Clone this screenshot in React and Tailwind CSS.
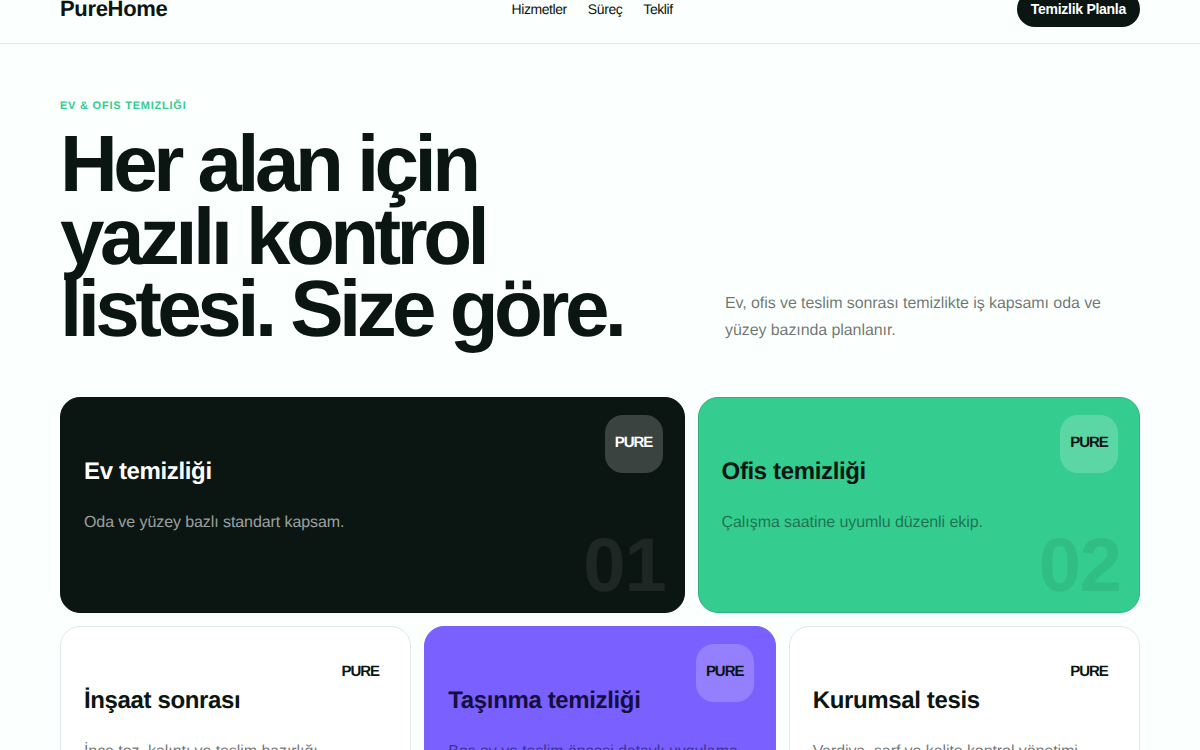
const font = { fontFamily: '"Liberation Sans", Arial, sans-serif' };

const services = [
  {
    title: "Ev temizliği",
    text: "Oda ve yüzey bazlı standart kapsam.",
    span: "col-span-7 bg-[#0b1512] border-[#0b1512]",
    titleColor: "text-white",
    textColor: "text-white/60",
    tag: "bg-white/20 text-white",
    num: "01",
    numColor: "text-white/8",
  },
  {
    title: "Ofis temizliği",
    text: "Çalışma saatine uyumlu düzenli ekip.",
    span: "col-span-5 bg-[#34cc8f] border-[#2bb57e]",
    titleColor: "text-[#0b1512]",
    textColor: "text-[#0b1512]/50",
    tag: "bg-white/20 text-[#0b1512]",
    num: "02",
    numColor: "text-[#0b1512]/7",
  },
  {
    title: "İnşaat sonrası",
    text: "İnce toz, kalıntı ve teslim hazırlığı.",
    span: "col-span-4 bg-white border-[#e3e7e5]",
    titleColor: "text-[#0b1512]",
    textColor: "text-[#0b1512]/60",
    tag: "text-[#0b1512]",
  },
  {
    title: "Taşınma temizliği",
    text: "Boş ev ve teslim öncesi detaylı uygulama.",
    span: "col-span-4 bg-[#7a60ff] border-[#7a60ff]",
    titleColor: "text-[#150f3d]",
    textColor: "text-[#150f3d]/60",
    tag: "bg-white/20 text-[#0b1512]",
  },
  {
    title: "Kurumsal tesis",
    text: "Vardiya, sarf ve kalite kontrol yönetimi.",
    span: "col-span-4 bg-white border-[#e3e7e5]",
    titleColor: "text-[#0b1512]",
    textColor: "text-[#0b1512]/60",
    tag: "text-[#0b1512]",
  },
];

const ServiceCard = ({ item }) => {
  return (
    <div className={`relative h-[216px] rounded-[20px] border px-[23px] pt-[58px] ${item.span}`}>
      <div
        className={`absolute right-[21px] top-[17px] flex h-[58px] w-[58px] items-center justify-center rounded-[18px] pb-[1px] text-[15px] font-bold tracking-[-0.07em] ${item.tag}`}
      >
        PURE
      </div>
      <h3 className={`text-2xl leading-[32px] font-bold tracking-[-0.015em] ${item.titleColor}`}>{item.title}</h3>
      <p className={`mt-[22px] text-base leading-[26px] tracking-[-0.005em] ${item.textColor}`}>{item.text}</p>
      {item.num && (
        <div
          className={`absolute bottom-[6px] right-[18px] text-[76px] leading-[80px] font-bold tracking-[-0.015em] ${item.numColor}`}
        >
          {item.num}
        </div>
      )}
    </div>
  );
};

const App = () => {
  return (
    <div className="h-[750px] overflow-hidden bg-[#fbfffd] text-[#0b1512] [text-rendering:geometricPrecision]" style={font}>
      <header className="h-[44px] overflow-hidden border-b border-[#e3e7e5]">
        <div className="-mt-[9px] flex h-[36px] items-center justify-between px-[60px]">
          <div className="pb-[1px] text-[22px] font-bold tracking-[-0.015em]">PureHome</div>
          <nav className="flex gap-[21px] text-sm tracking-[-0.03em]">
            <span>Hizmetler</span>
            <span>Süreç</span>
            <span>Teklif</span>
          </nav>
          <button className="flex h-[36px] items-center rounded-full bg-[#0b1512] px-[14px] text-sm font-bold tracking-[-0.02em] text-white">
            Temizlik Planla
          </button>
        </div>
      </header>

      <main className="px-[60px] pt-[56px]">
        <div className="text-[11px] leading-[12px] font-bold tracking-[0.07em] text-[#34cc8f]">
          EV &amp; OFIS TEMIZLIĞI
        </div>
        <div className="mt-[16px] flex items-end">
          <h1 className="w-[665px] shrink-0 text-[80px] leading-[72.5px] font-bold tracking-[-0.057em]">
            Her alan için
            <br />
            yazılı kontrol
            <br />
            listesi. Size göre.
          </h1>
          <p className="mb-[2px] w-[390px] text-base leading-[27px] tracking-[-0.005em] text-[#0b1512]/60">
            Ev, ofis ve teslim sonrası temizlikte iş kapsamı oda ve yüzey bazında planlanır.
          </p>
        </div>

        <div className="mt-[51px] grid grid-cols-12 gap-[13px]">
          {services.map((item) => (
            <ServiceCard key={item.title} item={item} />
          ))}
        </div>
      </main>
    </div>
  );
};

export default App;
